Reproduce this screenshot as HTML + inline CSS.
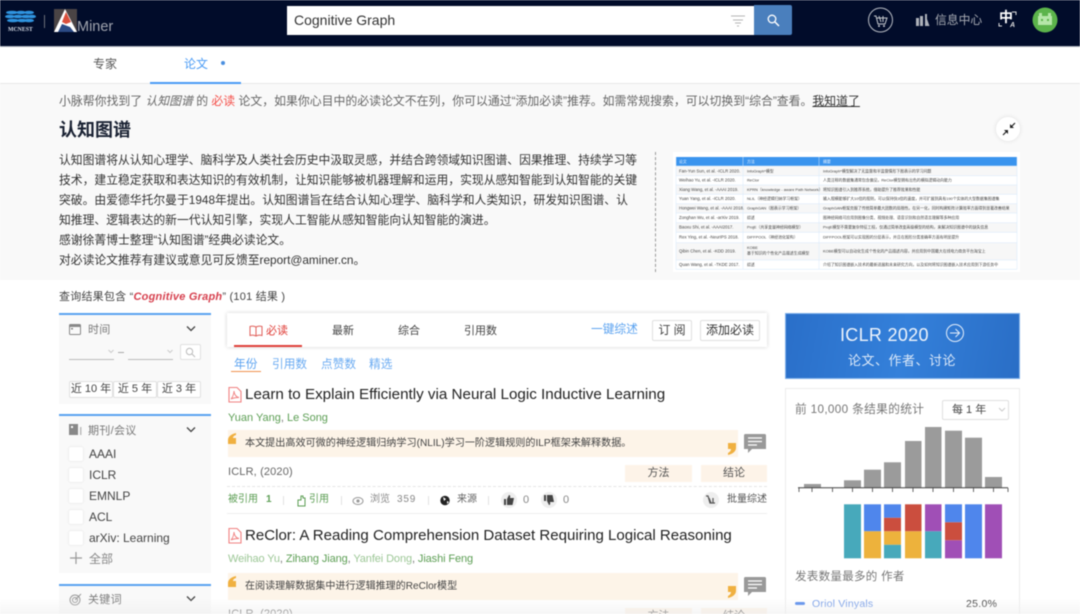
<!DOCTYPE html>
<html><head><meta charset="utf-8">
<style>
html,body{margin:0;padding:0;width:1080px;height:614px;overflow:hidden;background:#fff}
body{font-family:"Liberation Sans","Noto Sans CJK SC",sans-serif;color:#333;font-size:12px}
#w{position:relative;width:1080px;height:614px;overflow:hidden;background:#fff;filter:blur(.45px)}
.t{position:absolute;white-space:nowrap;line-height:20px;height:20px}
.b{position:absolute;box-sizing:border-box}
.p{position:absolute;left:59px;width:152px;background:#f9f9f9;border-top:2px solid #5aa2f0;box-sizing:border-box}
.cb{position:absolute;left:69px;width:14px;height:14px;background:#fff;border-radius:2px;box-shadow:0 0 2px #ddd}
.btn{position:absolute;box-sizing:border-box;background:#fff;border:1px solid #e0e0e0;border-radius:2px;text-align:center;color:#444;white-space:nowrap}
.tag{position:absolute;box-sizing:border-box;background:#fdf3e8;text-align:center;color:#555;font-size:11px;line-height:16px;height:17px}
.g{color:#5c9e54}
svg{position:absolute;overflow:visible}
.r{font-size:10px}
.l{font-size:11.800px}
</style></head><body><div id="w">
<!-- header -->
<div class="b" style="left:0;top:0;width:1080px;height:47px;background:#010c2a;border-bottom:1px solid #a9afb8"></div>
<svg style="left:0;top:0" width="120" height="46">
<g fill="#2f94e0"><ellipse cx="12" cy="12.500" rx="6" ry="1.800"/><ellipse cx="21" cy="12.500" rx="5" ry="1.800"/><ellipse cx="29" cy="12.500" rx="5" ry="1.800"/><ellipse cx="10" cy="16.500" rx="5" ry="1.800"/><ellipse cx="18" cy="16.500" rx="5" ry="1.800"/><ellipse cx="26" cy="16.500" rx="5" ry="1.800"/><ellipse cx="32" cy="16.500" rx="4" ry="1.800"/><ellipse cx="13" cy="20.500" rx="6" ry="1.800"/><ellipse cx="22" cy="20.500" rx="5" ry="1.800"/><ellipse cx="29" cy="20.500" rx="5" ry="1.800"/></g>
<text x="8" y="31" font-size="5.800" font-weight="bold" fill="#d5dbe5" font-family="Liberation Serif">MCNEST</text>
<rect x="44" y="15" width="1" height="13" fill="#6b6f79"/>
<rect x="54" y="9" width="23" height="23" fill="#4a4445"/>
<path d="M54 32L65 9L77 32Z" fill="#fff"/><path d="M58 32L62 24L70 27L74 32Z" fill="#2b4a85"/><path d="M62 22L66 12L71 22L66 24Z" fill="#d94f3c"/>
<text x="77" y="31" font-size="14.500" fill="#a0a4ae">Miner</text>
</svg>
<div class="b" style="left:287px;top:6px;width:467px;height:29px;background:#fff"></div>
<div class="t" style="left:294px;top:10px;font-size:14px;color:#333">Cognitive Graph</div>
<svg style="left:730px;top:14px" width="16" height="14"><g stroke="#b5b5b5" stroke-width="1"><path d="M1 2H15M3 6H13M5 9H11M7 12H9"/></g></svg>
<div class="b" style="left:754px;top:5px;width:38px;height:30px;background:#4a7fbd;border-radius:0 2px 2px 0"></div>
<svg style="left:766px;top:13px" width="14" height="14"><circle cx="6" cy="6" r="3.800" fill="none" stroke="#fff" stroke-width="1.300"/><path d="M9 9L13 13" stroke="#fff" stroke-width="1.500"/></svg>
<svg style="left:867px;top:7px" width="28" height="28"><circle cx="13.500" cy="13" r="12" fill="none" stroke="#b8bcc4" stroke-width="1"/><path d="M7 9H9L11 17H18L20 11H10M12 9L14 15M16 9L16 15" fill="none" stroke="#c5c8ce" stroke-width="1"/><circle cx="12" cy="19" r="1" fill="#c5c8ce"/><circle cx="17" cy="19" r="1" fill="#c5c8ce"/></svg>
<svg style="left:916px;top:13px" width="14" height="14"><g fill="#aeb2ba"><rect x="0" y="5" width="3" height="8"/><rect x="4" y="3" width="3" height="10"/><rect x="9" y="1" width="2" height="12"/><path d="M11 6L13.500 13H11Z"/></g></svg>
<div class="t" style="left:935px;top:10px;font-size:11.800px;color:#a8acb4">信息中心</div>
<div class="t" style="left:999px;top:7px;font-size:14px;color:#fff;font-weight:bold">中</div>
<svg style="left:998px;top:10px" width="20" height="18"><path d="M14 2H18V5M1 13V16H4" fill="none" stroke="#ddd" stroke-width="1"/><text x="12" y="17" font-size="7" font-style="italic" font-weight="bold" fill="#ddd">A</text></svg>
<svg style="left:1032px;top:7px" width="26" height="26"><circle cx="13" cy="13" r="12.500" fill="#5cb44b"/><rect x="6" y="9" width="14" height="9" fill="#b5e6a8"/><rect x="7" y="6" width="3" height="3" fill="#b5e6a8"/><rect x="16" y="6" width="3" height="3" fill="#b5e6a8"/><rect x="9" y="12" width="2" height="2" fill="#5cb44b"/><rect x="15" y="12" width="2" height="2" fill="#5cb44b"/></svg>
<!-- tabs -->
<div class="t" style="left:93px;top:54px;color:#555;font-size:12px">专家</div>
<div class="t" style="left:184px;top:54px;color:#4a9bf5;font-size:12px">论文</div>
<div class="b" style="left:221px;top:61px;width:4px;height:4px;border-radius:50%;background:#4a8fe0"></div>
<div class="b" style="left:0;top:83px;width:1080px;height:197px;background:#f9f9f9;border-top:1px solid #e8e8e8"></div>
<div class="b" style="left:150px;top:82px;width:91px;height:2px;background:#4a9bf5"></div>
<!-- intro -->
<div class="t" style="left:59px;top:91px;color:#666;font-size:11.880px">小脉帮你找到了 <i>认知图谱</i> 的 <span style="color:#f5504a">必读</span> 论文，如果你心目中的必读论文不在列，你可以通过“添加必读”推荐。如需常规搜索，可以切换到“综合”查看。<span style="color:#333;text-decoration:underline">我知道了</span></div>
<div class="t" style="left:59px;top:120px;font-size:18px;font-weight:bold;color:#1a2233">认知图谱</div>
<div class="t l" style="left:59px;top:150px">认知图谱将从认知心理学、脑科学及人类社会历史中汲取灵感，并结合跨领域知识图谱、因果推理、持续学习等</div>
<div class="t l" style="left:59px;top:170px">技术，建立稳定获取和表达知识的有效机制，让知识能够被机器理解和运用，实现从感知智能到认知智能的关键</div>
<div class="t l" style="left:59px;top:190px">突破。由爱德华托尔曼于1948年提出。认知图谱旨在结合认知心理学、脑科学和人类知识，研发知识图谱、认</div>
<div class="t l" style="left:59px;top:210px">知推理、逻辑表达的新一代认知引擎，实现人工智能从感知智能向认知智能的演进。</div>
<div class="t l" style="left:59px;top:230px">感谢徐菁博士整理“认知图谱”经典必读论文。</div>
<div class="t l" style="left:59px;top:250px">对必读论文推荐有建议或意见可反馈至report@aminer.cn。</div>
<div class="b" style="left:996px;top:117px;width:24px;height:24px;border-radius:50%;background:#fff;box-shadow:0 0 4px #ddd"></div>
<svg style="left:1002px;top:122px" width="14" height="14"><path d="M1 13L5 9M13 1L9 5" stroke="#222" stroke-width="1.200"/><path d="M2 8L6 8L6 12ZM12 6L8 6L8 2Z" fill="#222"/></svg>
<div class="b" style="left:655px;top:152px;width:0;height:120px;border-left:1px dashed #999"></div>
<svg style="left:0;top:0" width="1080" height="614" font-size="3.900" fill="#444">
<rect x="673" y="152" width="347" height="120" fill="#fff"/>
<rect x="676" y="157" width="341" height="9" fill="#3a94ee"/>
<rect x="676" y="166" width="341" height="9.500" fill="#f7f7f7"/><rect x="676" y="185" width="341" height="9.500" fill="#f7f7f7"/><rect x="676" y="204" width="341" height="9" fill="#f7f7f7"/><rect x="676" y="223" width="341" height="9.500" fill="#f7f7f7"/><rect x="676" y="243" width="341" height="17" fill="#f7f7f7"/>
<g stroke="#d6e8fb" stroke-width=".5"><path d="M676 166H1017M676 175.700H1017M676 185H1017M676 194.300H1017M676 203.700H1017M676 213H1017M676 222.700H1017M676 232.300H1017M676 242.700H1017M676 260H1017M676 269.300H1017M676 157V269M743 157V269M819 157V269M1017 157V269"/></g>
<g fill="#e8f2ff"><text x="679" y="163">论文</text><text x="747" y="163">方法</text><text x="823" y="163">摘要</text></g>
<g font-size="4.300"><text x="679" y="172.500">Fan-Yun Sun, et al. -ICLR 2020.</text><text x="679" y="181.500">Weihao Yu, et al. -ICLR 2020.</text><text x="679" y="191">Xiang Wang, et al. -AAAI 2019.</text><text x="679" y="200">Yuan Yang, et al. -ICLR 2020.</text><text x="679" y="209.500">Hongwei Wang, et al. -AAAI 2018.</text><text x="679" y="219">Zonghan Wu, et al. -arXiv 2019.</text><text x="679" y="228.500">Baoxu Shi, et al. -AAAI2017.</text><text x="679" y="238.500">Rex Ying, et al. -NeurIPS 2018.</text><text x="679" y="252.500">Qibin Chen, et al. -KDD 2019.</text><text x="679" y="266">Quan Wang, et al. -TKDE 2017.</text></g>
<text x="747" y="172.500">InfoGraph*模型</text><text x="823" y="172.500">InfoGraph*模型解决了无监督和半监督情形下图表示的学习问题</text>
<text x="747" y="181.500">ReClor</text><text x="823" y="181.500">人类注释的数据集通常包含偏见，ReClor模型拥有出色的模拟逻辑动向能力</text>
<text x="747" y="191">KPRN（knowledge - aware Path Network）</text><text x="823" y="191">将知识图谱引入到推荐系统，借助提升了推荐效果和性能</text>
<text x="747" y="200">NLIL（神经逻辑归纳学习框架）</text><text x="823" y="200">输入规模能够扩大10倍的规则，可以保持快3倍的速度，并可扩展到具有190个实体的大型数据集图谱集</text>
<text x="747" y="209.500">GraphGAN（图表示学习框架）</text><text x="823" y="209.500">GraphGAN框架克服了传统简单最大团数的局限性。在另一化，同时构建矩阵计算效率方面得到显著改善结果</text>
<text x="747" y="219">综述</text><text x="823" y="219">图神经网络可应用到图像分类、视频处理、语音识别和自然语言理解等多种应用</text>
<text x="747" y="228.500">ProjE（共享变量神经网络模型）</text><text x="823" y="228.500">ProjE模型不需要复杂特征工程，仅通过简单改变高级模型的结构，来解决知识图谱中的缺失信息</text>
<text x="747" y="238.500">DIFFPOOL（神经池化架构）</text><text x="823" y="238.500">DIFFPOOL框架可以实现图的分层表示，并且在图形分类准确率方面有明显提升</text>
<text x="747" y="249">KOBE</text><text x="747" y="254.500">基于知识的个性化产品描述生成模型</text><text x="823" y="252.500">KOBE模型可以自动化生成个性化的产品描述内容，并应用到中国最大在线电力商务平台淘宝上</text>
<text x="747" y="266">综述</text><text x="823" y="266">介绍了知识图谱嵌入技术的最新进展和未来研究方向，以及如何将知识图谱嵌入技术应用到下游任务中</text>
</svg>
<!-- result count -->
<div class="t" style="left:59px;top:287px;font-size:11px;letter-spacing:.22px;color:#444">查询结果包含 “<b style="color:#d6404e;font-style:italic">Cognitive Graph</b>” (101 结果 )</div>
<!-- left panel -->
<div class="p" style="top:313px;height:91px"></div>
<svg style="left:69px;top:323px" width="13" height="13"><rect x=".5" y="1.500" width="11" height="10" fill="none" stroke="#888" rx="1"/><rect x=".5" y="1.500" width="11" height="2.500" fill="#888"/><rect x="2" y="5" width="2" height="1.500" fill="#888"/></svg>
<div class="t" style="left:88px;top:320px;font-size:11px;color:#777;letter-spacing:.3px">时间</div>
<svg style="left:186px;top:325px" width="10" height="8"><path d="M1 1.500L5 5.500L9 1.500" fill="none" stroke="#444" stroke-width="1.300"/></svg>
<div class="b" style="left:69px;top:359px;width:45px;height:1px;background:#bbb"></div>
<div class="b" style="left:128px;top:359px;width:45px;height:1px;background:#bbb"></div>
<svg style="left:108px;top:348px" width="70" height="8"><path d="M.5 2L3 4.500L5.500 2M59.500 2L62 4.500L64.500 2" fill="none" stroke="#ccc"/></svg>
<div class="b" style="left:118px;top:352px;width:6px;height:1px;background:#aaa"></div>
<div class="btn" style="left:180px;top:344px;width:21px;height:16px"></div>
<svg style="left:185px;top:347px" width="11" height="11"><circle cx="4.500" cy="4.500" r="3.200" fill="none" stroke="#bbb"/><path d="M7 7L10 10" stroke="#bbb"/></svg>
<div class="btn" style="left:69px;top:381px;width:44px;height:17px;line-height:15px;font-size:11px">近 10 年</div>
<div class="btn" style="left:113px;top:381px;width:44px;height:17px;line-height:15px;font-size:11px">近 5 年</div>
<div class="btn" style="left:157px;top:381px;width:44px;height:17px;line-height:15px;font-size:11px">近 3 年</div>
<div class="p" style="top:414px;height:159px"></div>
<svg style="left:69px;top:423px" width="14" height="13"><rect x="0" y="1" width="9" height="11" fill="#888"/><rect x="2" y="3" width="2" height="2" fill="#fff"/><rect x="11" y="4" width="1.500" height="8" fill="#bbb"/></svg>
<div class="t" style="left:88px;top:421px;font-size:11px;color:#777;letter-spacing:.3px">期刊/会议</div>
<svg style="left:186px;top:426px" width="10" height="8"><path d="M1 1.500L5 5.500L9 1.500" fill="none" stroke="#444" stroke-width="1.300"/></svg>
<div class="cb" style="top:447px"></div><div class="t" style="left:89px;top:444px;color:#444">AAAI</div>
<div class="cb" style="top:468px"></div><div class="t" style="left:89px;top:465px;color:#444">ICLR</div>
<div class="cb" style="top:489px"></div><div class="t" style="left:89px;top:486px;color:#444">EMNLP</div>
<div class="cb" style="top:510px"></div><div class="t" style="left:89px;top:507px;color:#444">ACL</div>
<div class="cb" style="top:531px"></div><div class="t" style="left:89px;top:528px;color:#444">arXiv: Learning</div>
<svg style="left:70px;top:552px" width="12" height="12"><path d="M6 0V12M0 6H12" stroke="#999" stroke-width="1.200"/></svg>
<div class="t" style="left:89px;top:549px;color:#888">全部</div>
<div class="p" style="top:584px;height:30px"></div>
<svg style="left:69px;top:593px" width="13" height="13"><circle cx="6" cy="7" r="5" fill="none" stroke="#999"/><circle cx="6" cy="7" r="2.500" fill="none" stroke="#999"/><path d="M6 7L12 1" stroke="#999"/></svg>
<div class="t" style="left:88px;top:590px;font-size:11px;color:#777;letter-spacing:.3px">关键词</div>
<svg style="left:186px;top:595px" width="10" height="8"><path d="M1 1.500L5 5.500L9 1.500" fill="none" stroke="#444" stroke-width="1.300"/></svg>
<!-- center -->
<div class="b" style="left:227px;top:313px;width:540px;height:34px;background:#fff;box-shadow:0 0 4px rgba(0,0,0,.18)"></div>
<div class="b" style="left:234px;top:345px;width:68px;height:2px;background:#e0403a"></div>
<svg style="left:249px;top:325px" width="14" height="12"><path d="M7 2C5 1 3 1 1 1.500V10.500C3 10 5 10 7 11C9 10 11 10 13 10.500V1.500C11 1 9 1 7 2ZM7 2V11" fill="none" stroke="#e0605a" stroke-width="1"/></svg>
<div class="t" style="left:266px;top:321px;font-size:11px;color:#e0403a">必读</div>
<div class="t" style="left:332px;top:321px;font-size:11px;color:#444">最新</div>
<div class="t" style="left:398px;top:321px;font-size:11px;color:#444">综合</div>
<div class="t" style="left:464px;top:321px;font-size:11px;color:#444">引用数</div>
<div class="t" style="left:591px;top:320px;font-size:11.700px;color:#5aa2f0">一键综述</div>
<div class="btn" style="left:652px;top:320px;width:40px;height:21px;line-height:19px;font-size:12px">订 阅</div>
<div class="btn" style="left:700px;top:320px;width:60px;height:21px;line-height:19px;font-size:12px;color:#333">添加必读</div>
<div class="t" style="left:234px;top:355px;color:#5aa2f0;font-size:11.700px">年份</div>
<div class="b" style="left:231px;top:371px;width:30px;height:1px;background:#f0914e"></div>
<div class="t" style="left:272px;top:355px;color:#6aabf2;font-size:11.700px">引用数</div>
<div class="t" style="left:321px;top:355px;color:#6aabf2;font-size:11.700px">点赞数</div>
<div class="t" style="left:369px;top:355px;color:#6aabf2;font-size:11.700px">精选</div>
<!-- paper 1 -->
<svg style="left:228px;top:387px" width="14" height="16"><path d="M1 .5H9L13 4.500V15H1Z" fill="none" stroke="#f08080" stroke-width="1.100"/><path d="M3 12C5 10 6 6 6 4C6 7 8 10 11 10.500C8 10.500 5 11 3 12Z" fill="none" stroke="#f08080" stroke-width=".9"/></svg>
<div class="t" style="left:245px;top:385px;font-size:15.200px;color:#222">Learn to Explain Efficiently via Neural Logic Inductive Learning</div>
<div class="t" style="left:228px;top:408px;font-size:11px;color:#5c9e54">Yuan Yang<span style="color:#777">,</span> Le Song</div>
<div class="b" style="left:228px;top:430px;width:510px;height:27px;background:#fdf4e8"></div>
<svg style="left:228px;top:433px" width="8" height="11"><path d="M8 0C3 1 0 4 0 7V11H8V5H5C5 3.500 6 2.500 8 2Z" fill="#f0b040"/></svg>
<svg style="left:728px;top:443px" width="8" height="12"><path d="M0 12C5 11 8 8 8 5V0H0V6H3C3 7.500 2 9 0 10Z" fill="#f0b040"/></svg>
<div class="t" style="left:245px;top:434px;font-size:10.100px;color:#444">本文提出高效可微的神经逻辑归纳学习(NLIL)学习一阶逻辑规则的ILP框架来解释数据。</div>
<svg style="left:744px;top:434px" width="22" height="20"><path d="M1.500 0H20.500A1.500 1.500 0 0 1 22 1.500V15H8L4 19V15H0V1.500A1.500 1.500 0 0 1 1.500 0Z" fill="#999"/><path d="M4 4H18M4 7.500H18M4 11H13" stroke="#fff" stroke-width="1.200"/></svg>
<div class="t" style="left:228px;top:462px;font-size:11px;color:#666;letter-spacing:.15px">ICLR, (2020)</div>
<div class="tag" style="left:625px;top:465px;width:67px">方法</div>
<div class="tag" style="left:701px;top:465px;width:66px">结论</div>
<div class="b" style="left:227px;top:486px;width:540px;height:0;border-top:1px dashed #e5e5e5"></div>
<div class="t r" style="left:228px;top:490px;color:#5c9e54">被引用</div>
<div class="t r" style="left:266px;top:490px;color:#5c9e54;font-weight:bold">1</div>
<div class="b" style="left:283px;top:496px;width:1px;height:9px;background:#e2e2e2"></div>
<svg style="left:297px;top:495px" width="10" height="12"><path d="M1 11H8V3H6V1H4V5H1Z" fill="none" stroke="#5c9e54"/></svg>
<div class="t r" style="left:309px;top:490px;color:#5c9e54">引用</div>
<div class="b" style="left:341px;top:496px;width:1px;height:9px;background:#e2e2e2"></div>
<svg style="left:352px;top:496px" width="12" height="10"><ellipse cx="6" cy="5" rx="5" ry="3.500" fill="none" stroke="#999"/><circle cx="6" cy="5" r="1.600" fill="#999"/></svg>
<div class="t r" style="left:370px;top:490px;color:#888">浏览</div>
<div class="t r" style="left:397px;top:490px;color:#888;letter-spacing:.8px">359</div>
<div class="b" style="left:428px;top:496px;width:1px;height:9px;background:#e2e2e2"></div>
<svg style="left:440px;top:495px" width="10" height="11"><circle cx="5" cy="5.500" r="4.700" fill="#222"/><path d="M3 2L6 4L4 6ZM7 6L9 7L7 9Z" fill="#fff"/></svg>
<div class="t r" style="left:457px;top:490px;color:#666">来源</div>
<div class="b" style="left:488px;top:496px;width:1px;height:9px;background:#e2e2e2"></div>
<div class="b" style="left:501px;top:492px;width:16px;height:16px;border-radius:50%;background:#eee"></div>
<svg style="left:504px;top:495px" width="10" height="10"><path d="M0 4H2V10H0ZM3 4L5 0C6 0 6.500 1 6 3H10L8.500 10H3Z" fill="#444"/></svg>
<div class="t r" style="left:523px;top:490px;color:#888;font-size:11px">0</div>
<div class="b" style="left:541px;top:492px;width:16px;height:16px;border-radius:50%;background:#eee"></div>
<svg style="left:544px;top:495px" width="10" height="10"><path d="M0 6H2V0H0ZM3 6L5 10C6 10 6.500 9 6 7H10L8.500 0H3Z" fill="#444"/></svg>
<div class="t r" style="left:563px;top:490px;color:#888;font-size:11px">0</div>
<div class="b" style="left:703px;top:492px;width:16px;height:16px;border-radius:50%;background:#eee"></div>
<svg style="left:706px;top:495px" width="10" height="10"><path d="M0 1H2L4 8H9M3 3L5 8M7 3V8" fill="none" stroke="#555" stroke-width="1.200"/></svg>
<div class="t r" style="left:727px;top:490px;color:#555">批量综述</div>
<div class="b" style="left:227px;top:513px;width:540px;height:1px;background:#eee"></div>
<!-- paper 2 -->
<svg style="left:228px;top:528px" width="14" height="16"><path d="M1 .5H9L13 4.500V15H1Z" fill="none" stroke="#f08080" stroke-width="1.100"/><path d="M3 12C5 10 6 6 6 4C6 7 8 10 11 10.500C8 10.500 5 11 3 12Z" fill="none" stroke="#f08080" stroke-width=".9"/></svg>
<div class="t" style="left:245px;top:526px;font-size:15.050px;color:#222">ReClor: A Reading Comprehension Dataset Requiring Logical Reasoning</div>
<div class="t" style="left:228px;top:549px;font-size:11px;letter-spacing:-.1px;color:#5c9e54"><span style="color:#9cc796">Weihao Yu</span><span style="color:#777">,</span> Zihang Jiang<span style="color:#777">,</span> <span style="color:#9cc796">Yanfei Dong</span><span style="color:#777">,</span> Jiashi Feng</div>
<div class="b" style="left:228px;top:573px;width:510px;height:27px;background:#fdf4e8"></div>
<svg style="left:228px;top:576px" width="8" height="11"><path d="M8 0C3 1 0 4 0 7V11H8V5H5C5 3.500 6 2.500 8 2Z" fill="#f0b040"/></svg>
<svg style="left:728px;top:586px" width="8" height="12"><path d="M0 12C5 11 8 8 8 5V0H0V6H3C3 7.500 2 9 0 10Z" fill="#f0b040"/></svg>
<div class="t" style="left:245px;top:577px;font-size:10.050px;color:#444">在阅读理解数据集中进行逻辑推理的ReClor模型</div>
<svg style="left:744px;top:577px" width="22" height="20"><path d="M1.500 0H20.500A1.500 1.500 0 0 1 22 1.500V15H8L4 19V15H0V1.500A1.500 1.500 0 0 1 1.500 0Z" fill="#999"/><path d="M4 4H18M4 7.500H18M4 11H13" stroke="#fff" stroke-width="1.200"/></svg>
<div class="t" style="left:228px;top:604px;font-size:11px;color:#666;letter-spacing:.15px">ICLR, (2020)</div>
<div class="tag" style="left:625px;top:608px;width:67px">方法</div>
<div class="tag" style="left:701px;top:608px;width:66px">结论</div>
<!-- right -->
<div class="b" style="left:785px;top:313px;width:235px;height:66px;background:linear-gradient(100deg,#2a6fc9,#3480da 50%,#2a6ec6);border:1px solid #7fb0ea"></div>
<div class="t" style="left:840px;top:325px;font-size:18px;color:#eef4fc;letter-spacing:.3px">ICLR 2020</div>
<svg style="left:945px;top:323px" width="20" height="20"><circle cx="10" cy="10" r="8.500" fill="none" stroke="#e4eefb" stroke-width="1"/><path d="M5 10H14M10.500 6L14.500 10L10.500 14" fill="none" stroke="#e4eefb"/></svg>
<div class="t" style="left:848px;top:351px;font-size:13px;color:#dce9f9;letter-spacing:.5px">论文、作者、讨论</div>
<div class="b" style="left:785px;top:388px;width:235px;height:240px;background:#fff;border:1px solid #ececec"></div>
<div class="t" style="left:795px;top:400px;font-size:11.700px;color:#777;letter-spacing:.35px">前 10,000 条结果的统计</div>
<div class="btn" style="left:942px;top:400px;width:67px;height:20px;line-height:18px;font-size:11px;color:#444;text-align:left;padding-left:9px">每 1 年</div>
<svg style="left:998px;top:407px" width="8" height="6"><path d="M1 1L4 4L7 1" fill="none" stroke="#ccc"/></svg>
<svg style="left:0;top:0" width="1080" height="614">
<g fill="#9b9b9b"><rect x="804" y="484" width="17" height="4"/><rect x="844" y="480.300" width="17" height="7.700"/><rect x="864" y="469.700" width="17" height="18.300"/><rect x="884" y="462.300" width="17" height="25.700"/><rect x="905" y="441" width="16.500" height="47"/><rect x="925" y="427" width="16.500" height="61"/><rect x="945" y="430.700" width="17" height="57.300"/><rect x="965" y="437.700" width="17" height="50.300"/><rect x="985" y="477" width="17" height="11"/></g>
<path d="M798 487.700H1008" stroke="#444"/>
<path d="M799 488V492M812 488V492M832.500 488V492M852.500 488V492M872.500 488V492M892.500 488V492M913 488V492M933 488V492M953.500 488V492M973.500 488V492M993.500 488V492M1008 488V492" stroke="#444" stroke-width=".8"/>
<rect x="844" y="504.300" width="17" height="54" fill="#47a9bb"/>
<rect x="864" y="504.300" width="17" height="27" fill="#4f86ec"/><rect x="864" y="531.300" width="17" height="27" fill="#edb23c"/>
<rect x="884" y="504.300" width="17" height="13.500" fill="#4f86ec"/><rect x="884" y="517.800" width="17" height="13.500" fill="#cb4e3e"/><rect x="884" y="531.300" width="17" height="13.500" fill="#edb23c"/><rect x="884" y="544.800" width="17" height="13.500" fill="#47a9bb"/>
<rect x="905" y="504.300" width="16.500" height="27" fill="#cb4e3e"/><rect x="905" y="531.300" width="16.500" height="27" fill="#edb23c"/>
<rect x="925" y="504.300" width="16.500" height="27" fill="#a04fb6"/><rect x="925" y="531.300" width="16.500" height="27" fill="#47a9bb"/>
<rect x="945" y="504.300" width="17" height="18" fill="#4f86ec"/><rect x="945" y="522.300" width="17" height="18" fill="#cb4e3e"/><rect x="945" y="540.300" width="17" height="18" fill="#a04fb6"/>
<rect x="965" y="504.300" width="17" height="54" fill="#4f86ec"/>
<rect x="985" y="504.300" width="17" height="54" fill="#a04fb6"/>
</svg>
<div class="t" style="left:795px;top:567px;font-size:11.500px;color:#777;letter-spacing:.3px">发表数量最多的 作者</div>
<div class="b" style="left:795px;top:602px;width:10px;height:3px;border-radius:2px;background:#4f86ec"></div>
<div class="t" style="left:812px;top:594px;font-size:10.500px;color:#6f98e8;letter-spacing:.2px">Oriol Vinyals</div>
<div class="t" style="left:966px;top:594px;font-size:10.500px;color:#333;letter-spacing:.3px">25.0%</div>
<div class="b" style="left:0;top:598px;width:1080px;height:16px;background:linear-gradient(rgba(238,238,238,0),rgba(238,238,238,.55))"></div>
</div></body></html>
